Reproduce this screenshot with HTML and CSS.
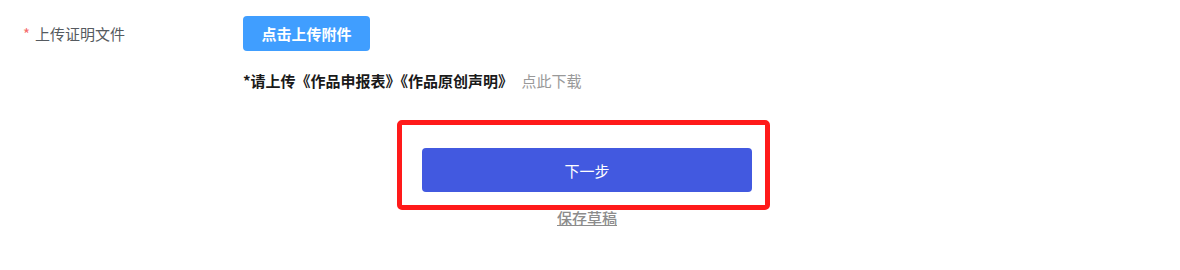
FILE: index.html
```html
<!DOCTYPE html>
<html lang="zh-CN">

<head>
    <meta charset="UTF-8">
    <title>上传证明文件</title>
    <link rel="stylesheet" href="styles.css">
</head>

<body>
    <main class="form">
        <!-- riga upload -->
        <div class="form-item">
            <label class="form-label"><span class="required">*</span>上传证明文件</label>
            <div class="form-content">
                <button class="btn-upload">点击上传附件</button>
            </div>
        </div>

        <!-- suggerimento -->
        <div class="form-tip">
            <span class="tip-main">*请上传《作品申报表》《作品原创声明》</span>
            <a class="tip-link">点此下载</a>
        </div>

        <!-- azioni -->
        <div class="actions">
            <button class="btn-next">下一步</button>
            <a class="save-draft">保存草稿</a>
            <div class="highlight"></div>
        </div>
    </main>
</body>

</html>
```

FILE: styles.css
```css
/* [GENERALE] */
body {
    margin: 0;
    padding: 0;
    background: #ffffff;
    font-family: "Noto Sans CJK SC", "Liberation Sans", sans-serif;
    font-size: 15px;
}

.form {
    padding-top: 16px;
}

/* [RIGA UPLOAD] */
.form-item {
    display: flex;
    align-items: center;
}

.form-label {
    width: 243px;
    box-sizing: border-box;
    padding-left: 23px;
    color: #555a60;
    line-height: 20px;
}

.required {
    color: #f56c6c;
    margin-right: 5px;
}

.btn-upload {
    width: 127px;
    height: 35px;
    border: none;
    border-radius: 4px;
    background: #409eff;
    color: #ffffff;
    font-family: inherit;
    font-size: 15px;
    font-weight: bold;
    padding: 0;
}

/* [SUGGERIMENTO] */
.form-tip {
    margin-top: 20px;
    padding-left: 243px;
    line-height: 20px;
}

.tip-main {
    font-weight: bold;
    color: #1a1a1a;
}

.tip-link {
    color: #999999;
    margin-left: 5px;
}

/* [AZIONI] */
.actions {
    position: relative;
    width: 330px;
    margin-left: 422px;
    margin-top: 57px;
    display: flex;
    flex-direction: column;
    align-items: center;
}

.btn-next {
    width: 330px;
    height: 44px;
    border: none;
    border-radius: 4px;
    background: #4259e0;
    color: #ffffff;
    font-family: inherit;
    font-size: 15px;
}

.save-draft {
    margin-top: 16px;
    color: #8c8c8c;
    font-weight: 500;
    text-decoration: underline;
    line-height: 20px;
}

/* [RIQUADRO ROSSO SOPRA IL PULSANTE] */
.highlight {
    position: absolute;
    left: -25px;
    top: -28px;
    width: 363px;
    height: 80px;
    border: 5px solid #ff1a1a;
    border-radius: 5px;
}
```
